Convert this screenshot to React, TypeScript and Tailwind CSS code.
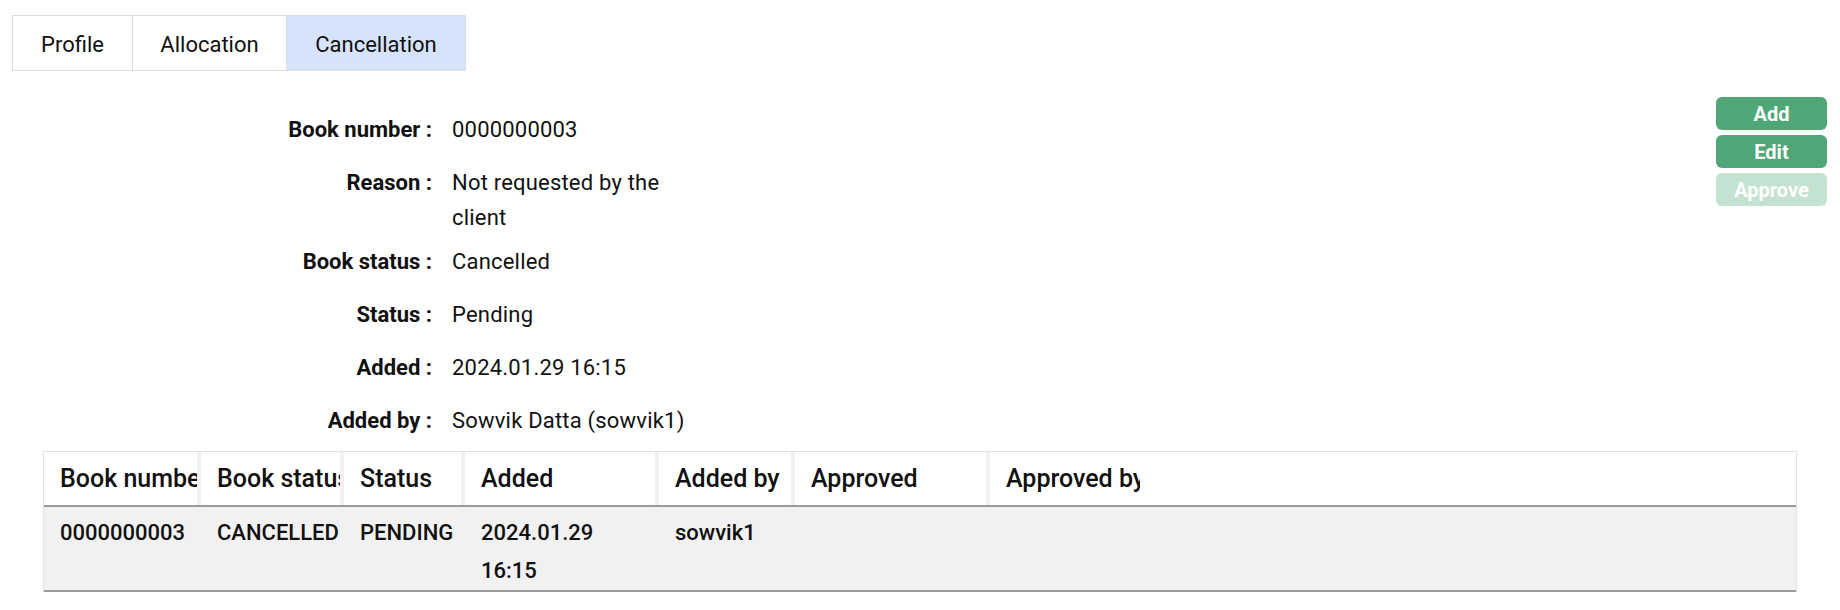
import React, { useState } from "react";

interface DetailRow {
  label: string;
  value: string;
}

interface Column {
  title: string;
  width: string;
  value: string;
  divider: boolean;
}

const details: DetailRow[] = [
  { label: "Book number", value: "0000000003" },
  { label: "Reason", value: "Not requested by the client" },
  { label: "Book status", value: "Cancelled" },
  { label: "Status", value: "Pending" },
  { label: "Added", value: "2024.01.29 16:15" },
  { label: "Added by", value: "Sowvik Datta (sowvik1)" },
];

const columns: Column[] = [
  { title: "Book number", width: "w-[157px]", value: "0000000003", divider: true },
  { title: "Book status", width: "w-[143px]", value: "CANCELLED", divider: true },
  { title: "Status", width: "w-[121px]", value: "PENDING", divider: true },
  { title: "Added", width: "w-[194px]", value: "2024.01.29 16:15", divider: true },
  { title: "Added by", width: "w-[136px]", value: "sowvik1", divider: true },
  { title: "Approved", width: "w-[195px]", value: "", divider: true },
  { title: "Approved by", width: "w-[150px]", value: "", divider: false },
];

const tabs = [
  { name: "Profile", width: "w-[119px]" },
  { name: "Allocation", width: "w-[154px]" },
  { name: "Cancellation", width: "w-[179px]" },
];

const App: React.FC = () => {
  const [activeTab, setActiveTab] = useState<number>(2);

  return (
    <div className="min-h-[610px] w-full bg-white font-[Roboto,sans-serif] text-[#111]">
      {/* tabs */}
      <div className="px-[12px] pt-[15px]">
        <div className="flex w-fit border border-[#dedede]">
          {tabs.map((tab, i) => (
            <button
              key={tab.name}
              onClick={() => setActiveTab(i)}
              className={`flex h-[54px] items-center justify-center pt-[2px] text-[22px] ${tab.width} ${
                i > 0 ? "border-l border-[#dedede]" : ""
              } ${activeTab === i ? "bg-[#d5e3fb]" : "bg-white"}`}
            >
              {tab.name}
            </button>
          ))}
        </div>
      </div>

      <div className="flex justify-between pr-[13px] pt-[26px]">
        <div className="pt-[15px]">
          {details.map((row, i) => (
            <div
              key={row.label}
              className={`flex text-[22px] leading-[35px] ${
                i < details.length - 1 ? "min-h-[53px] pb-[9px]" : ""
              }`}
            >
              <div className="w-[432px] text-right font-bold">{row.label} :</div>
              <div className="ml-[20px] w-[250px] tracking-[0.2px]">{row.value}</div>
            </div>
          ))}
        </div>

        <div className="flex w-[111px] flex-col gap-[5px]">
          <button className="h-[33px] rounded-[6px] bg-[#4fa677] text-[20px] font-bold text-white">
            Add
          </button>
          <button className="h-[33px] rounded-[6px] bg-[#4fa677] text-[20px] font-bold text-white">
            Edit
          </button>
          <button
            disabled
            className="h-[33px] rounded-[6px] bg-[#c4e2d2] text-[20px] font-bold text-white"
          >
            Approve
          </button>
        </div>
      </div>

      {/* table */}
      <div className="mx-[43px] mt-[13px] border-x border-t border-[#e2e2e2]">
        <div className="flex h-[55px] border-b-2 border-[#9a9a9a]">
          {columns.map((col) => (
            <div
              key={col.title}
              className={`flex shrink-0 items-center overflow-hidden whitespace-nowrap pl-[16px] text-[25px] font-medium ${col.width} ${
                col.divider ? "border-r-[4px] border-[#f1f1f1]" : ""
              }`}
            >
              {col.title}
            </div>
          ))}
          <div className="flex-1" />
        </div>
        <div className="flex h-[85px] border-b-2 border-[#9a9a9a] bg-[#f1f1f1]">
          {columns.map((col) => (
            <div
              key={col.title}
              className={`shrink-0 pl-[16px] pr-[16px] pt-[7px] text-[22px] font-medium leading-[38px] ${col.width}`}
            >
              {col.value}
            </div>
          ))}
          <div className="flex-1" />
        </div>
      </div>
    </div>
  );
};

export default App;
